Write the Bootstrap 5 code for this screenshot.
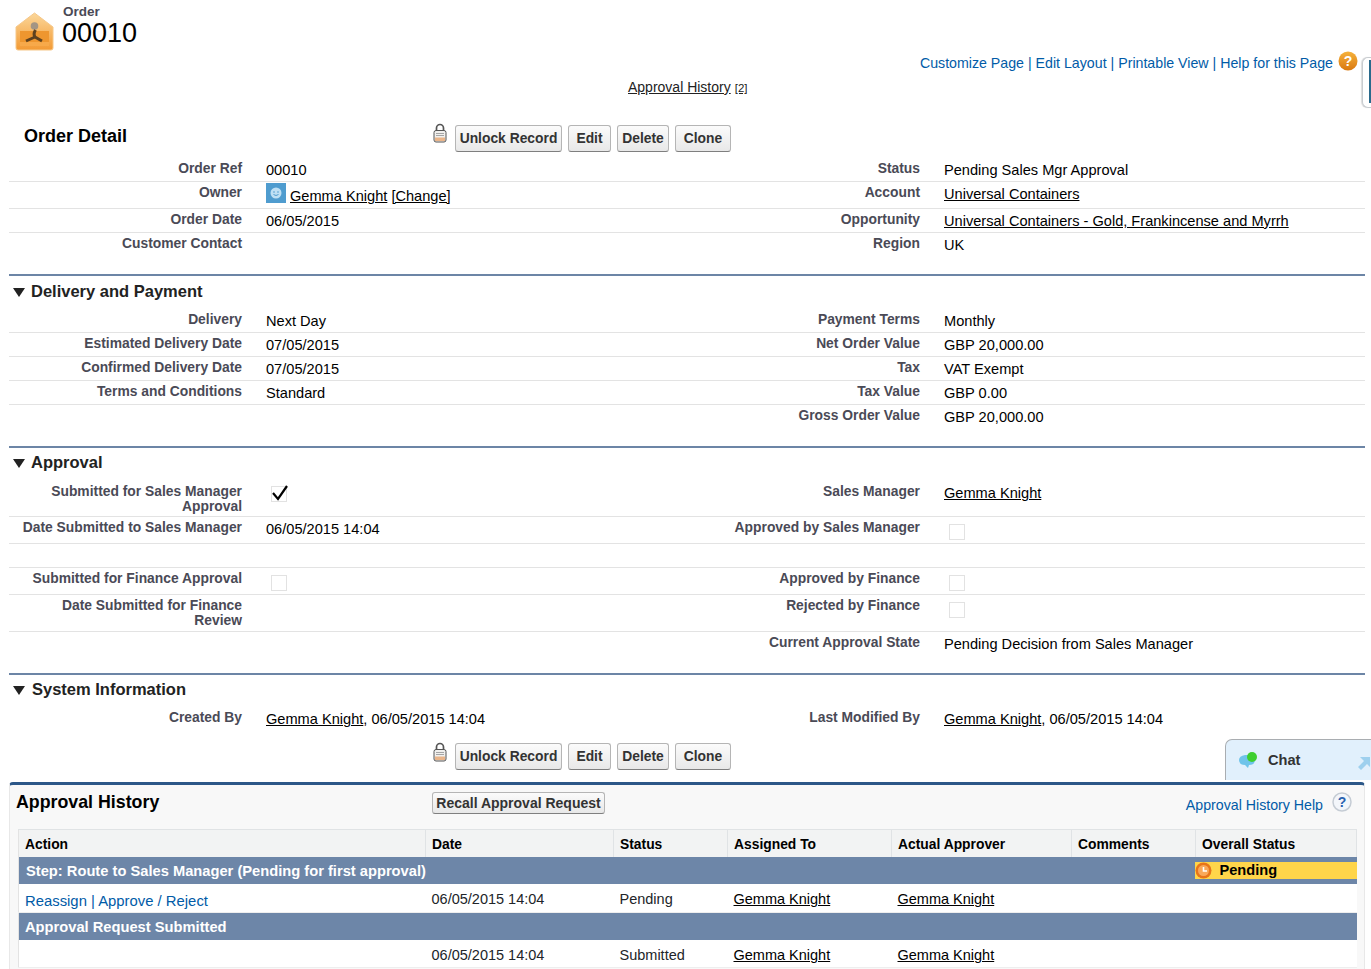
<!DOCTYPE html>
<html lang="en">
<head>
<meta charset="utf-8">
<title>Order 00010</title>
<link href="https://cdn.jsdelivr.net/npm/bootstrap@5.3.0/dist/css/bootstrap.min.css" rel="stylesheet">
<style>
html,body{height:969px;overflow:hidden;background:#fff;}
body{font-family:"Liberation Sans",Arial,sans-serif;font-size:14.6px;color:#000;line-height:1.15;position:relative;}
a{color:#000;}
.pg{padding:0 6px 0 9px;}
.blue,.blue:hover{color:#015ba7;text-decoration:none;}
.sep{color:#015ba7;}
.hdr{height:50px;padding-left:6px;}
.hdr-ico{width:39px;height:39px;margin-top:12px;flex:none;}
.hdr-type{font-size:13.5px;font-weight:700;color:#4a4a56;line-height:16px;padding-top:4px;margin-left:1px;}
.hdr-name{font-size:27px;line-height:27px;}
.hdr-txt{margin-left:8px;}
.links{height:29px;padding-top:5px;padding-right:32px;position:relative;font-size:14.2px;}
.help-o{position:absolute;right:7px;top:1px;width:20px;height:20px;}
.hist-link{height:29px;}
.hist-link a{font-size:14px;color:#222;}
.hist-link small{font-size:11.5px;}
.hist-inner{margin-left:605px;width:140px;white-space:nowrap;padding-left:14px;line-height:16px;}
.title-row{height:50px;}
.title-txt{font-size:18px;font-weight:700;width:423px;padding-left:15px;padding-top:18px;flex:none;}
.lock{width:16px;height:20px;margin-right:7px;flex:none;}
.title-row .lock{margin-top:15px;}
.actions{gap:6px;align-items:flex-start;padding-top:17px;}
.sbtn{--bs-btn-padding-x:0;--bs-btn-padding-y:0;font:700 13.85px/25px "Liberation Sans",Arial,sans-serif;height:27px;color:#333;background:linear-gradient(#fbfbfb,#e8e8e8);border:1px solid #b5b5b5;border-bottom-color:#7f7f7f;border-radius:3px;white-space:nowrap;}
.w-unlock{width:107px;}.w-edit{width:43px;}.w-del{width:52px;}.w-clone{width:56px;}
.rw{display:flex;border-bottom:1px solid #e3e3e3;}
.rw.last{border-bottom:0;}
.lb{width:233px;flex:none;text-align:right;font-weight:700;font-size:13.85px;color:#4a4a56;line-height:15px;padding-top:3px;}
.vl{flex:none;margin-left:24px;width:430px;padding-top:4px;line-height:16px;}
.own{padding-top:5px;}
.lb2{width:224px;}
.vl2{width:421px;}
.h24{height:24px;}.h27{height:27px;}.h36{height:36px;}.h37{height:37px;}
.sect{border-top:2px solid #6c85a6;display:flex;align-items:center;height:35px;padding-bottom:4px;font-size:16.5px;font-weight:700;color:#222;}
.sect.dly{padding-bottom:2px;}
.sect.sys{height:34px;padding-bottom:3px;}
.sect.sys .tri{margin-right:7px;}
.tri{width:12px;height:9px;margin:1px 6px 0 4px;flex:none;}
.gap1{height:17px;}
.ava{width:20px;height:20px;margin-right:4px;vertical-align:-2px;margin-top:-4px;}
.cbx{width:16px;height:16px;display:block;margin:3px 0 0 5px;overflow:visible;}
.cbx.chk{margin-top:1px;}
.btm-bar{height:39px;padding-left:423px;padding-top:12px;}
.btm-bar .lock{margin-top:-1px;}
.btm-btns{gap:6px;}
.panel{background:#f8f8f8;border:1px solid #e8e8e8;border-top:3px solid #2c5788;border-radius:4px 4px 0 0;margin-top:12px;height:220px;padding:0 8px;}
.pan-head{height:44px;position:relative;}
.pan-title{font-size:17.8px;font-weight:700;position:absolute;left:-2px;top:7px;}
.recall{position:absolute;left:414px;top:7px;width:173px;height:22px;line-height:20px;font-size:14px;}
.pan-help{position:absolute;right:33px;top:12px;font-size:14.2px;}
.q{position:absolute;right:4px;top:7px;width:20px;height:20px;}
.hist{table-layout:fixed;width:1338px;margin:0;border-collapse:collapse;--bs-table-bg:transparent;background:#fff;border-left:1px solid #e3e3e3;}
.hist td,.hist th{padding:0;border:0;font-size:14.5px;vertical-align:middle;white-space:nowrap;overflow:visible;}
.hist th{background:#f2f3f3;font-size:13.85px;height:27px;border-right:1px solid #e0e3e5;border-top:1px solid #e0e3e5;padding:3px 0 0 6px;color:#000;}
.hist .st td{background:#6d86a8;color:#fff;font-weight:700;font-size:14.7px;height:27px;padding:2px 0 0 7px;}
.hist .st td.st2{padding-left:6px;}
.hist .dt td{padding:4px 0 0 6px;height:29px;border-bottom:1px solid #eee;}
.hist .dt.a td{height:28px;}
.hist .dt td.acts{font-size:14.85px;padding-top:7px;}
.hist .st td.pend-cell{padding:0;}
.pend-in{display:flex;align-items:center;gap:8px;background:#ffd54a;color:#000;height:17px;font-size:14.6px;margin:1px 0 0 -1px;}
.clk{width:17px;height:17px;flex:none;}
.chat{position:absolute;left:1225px;top:739px;width:146px;height:41px;background:#e1f0fc;border:1px solid #a9adb1;border-right:0;border-bottom:0;border-radius:7px 0 0 0;display:flex;align-items:center;font-weight:700;color:#333;font-size:14.6px;}
.chat-ico{width:21px;height:19px;margin:0 9px 0 12px;}
.chat-arr{position:absolute;right:0;top:16px;width:14px;height:14px;}
.tab{position:absolute;right:0;top:57px;width:9px;height:51px;background:#fff;border:1px solid #c8ccd0;border-right:0;border-radius:6px 0 0 6px;box-shadow:-1px 0 1px #ddd;}
.tab::after{content:"";position:absolute;left:6px;top:2px;bottom:4px;right:0;background:#2a6a8c;}
</style>
</head>
<body>
<svg width="0" height="0" class="position-absolute">
  <defs>
    <symbol id="lockic" viewBox="0 0 16 20"><path d="M4.500 8V5a3.500 3.500 0 0 1 7 0v3" fill="none" stroke="#555" stroke-width="1.700"/><rect x="2" y="7.500" width="12" height="11.500" rx="2" fill="#f1f0ee" stroke="#555"/><rect x="3" y="14.500" width="10" height="3.500" fill="#eab58a"/><path d="M4 10.500h8M4 12.500h8" stroke="#a5a5a5"/></symbol>
    <symbol id="box" viewBox="0 0 16 16"><rect x=".5" y=".5" width="15" height="15" fill="none" stroke="#c4c4c4" stroke-dasharray="1 1"/></symbol>
    <symbol id="trig" viewBox="0 0 12 9"><path d="M0 0h12L6 9z" fill="#222"/></symbol>
  </defs>
</svg>
<div class="pg">
  <div class="hdr d-flex">
    <svg class="hdr-ico" viewBox="0 0 39 39"><defs><linearGradient id="hg" x1="0" y1="0" x2="0" y2="1"><stop offset="0" stop-color="#fbd79a"/><stop offset="1" stop-color="#f39a34"/></linearGradient></defs><path d="M19.500 1 L38 15 V36 Q38 38 36 38 H3 Q1 38 1 36 V15Z" fill="url(#hg)" stroke="#f6c88a"/><path d="M5 19h29v15H5z" fill="#ee962f"/><path d="M5 30h29v4H5z" fill="#f7a94a"/><circle cx="19.500" cy="14" r="3.800" fill="#a39584"/><path d="M20.500 18q-2.500 4 -.5 7M20 25L11 29M20 25L27 29" fill="none" stroke="#5d4120" stroke-width="3"/></svg>
    <div class="hdr-txt"><div class="hdr-type">Order</div><div class="hdr-name">00010</div></div>
  </div>
  <div class="links text-end">
    <a class="blue" href="#">Customize Page</a> <span class="sep">|</span> <a class="blue" href="#">Edit Layout</a> <span class="sep">|</span> <a class="blue" href="#">Printable View</a> <span class="sep">|</span> <a class="blue" href="#">Help for this Page</a>
    <svg class="help-o" viewBox="0 0 20 20"><defs><linearGradient id="og" x1="0" y1="0" x2="0" y2="1"><stop offset="0" stop-color="#f6b23c"/><stop offset="1" stop-color="#d9780f"/></linearGradient></defs><circle cx="10" cy="10" r="9.500" fill="url(#og)"/><text x="10" y="15" text-anchor="middle" font-family="Liberation Sans" font-weight="700" font-size="14" fill="#fff">?</text></svg>
  </div>
  <div class="hist-link"><div class="hist-inner"><a href="#">Approval History</a> <a href="#"><small>[2]</small></a></div></div>
  <div class="title-row d-flex">
    <div class="title-txt">Order Detail</div>
    <svg class="lock"><use href="#lockic"/></svg>
    <div class="d-flex actions"><button class="btn sbtn w-unlock">Unlock Record</button><button class="btn sbtn w-edit">Edit</button><button class="btn sbtn w-del">Delete</button><button class="btn sbtn w-clone">Clone</button></div>
  </div>
  <div class="rw h24"><div class="lb">Order Ref</div><div class="vl">00010</div><div class="lb lb2">Status</div><div class="vl vl2">Pending Sales Mgr Approval</div></div>
  <div class="rw h27"><div class="lb">Owner</div><div class="vl own"><svg class="ava" viewBox="0 0 20 20"><rect width="20" height="20" fill="#4f9ccf"/><circle cx="10" cy="10" r="5.500" fill="#bfe0f4"/><circle cx="8" cy="9" r=".8" fill="#4f9ccf"/><circle cx="12" cy="9" r=".8" fill="#4f9ccf"/><path d="M7.500 11.500q2.500 2 5 0" fill="none" stroke="#4f9ccf"/></svg><a href="#">Gemma Knight</a> <a href="#">[Change]</a></div><div class="lb lb2">Account</div><div class="vl vl2"><a href="#">Universal Containers</a></div></div>
  <div class="rw h24"><div class="lb">Order Date</div><div class="vl">06/05/2015</div><div class="lb lb2">Opportunity</div><div class="vl vl2"><a href="#">Universal Containers - Gold, Frankincense and Myrrh</a></div></div>
  <div class="rw last h24"><div class="lb">Customer Contact</div><div class="vl"></div><div class="lb lb2">Region</div><div class="vl vl2">UK</div></div>
  <div class="gap1"></div>
  <div class="sect dly"><svg class="tri"><use href="#trig"/></svg>Delivery and Payment</div>
  <div class="rw h24"><div class="lb">Delivery</div><div class="vl">Next Day</div><div class="lb lb2">Payment Terms</div><div class="vl vl2">Monthly</div></div>
  <div class="rw h24"><div class="lb">Estimated Delivery Date</div><div class="vl">07/05/2015</div><div class="lb lb2">Net Order Value</div><div class="vl vl2">GBP 20,000.00</div></div>
  <div class="rw h24"><div class="lb">Confirmed Delivery Date</div><div class="vl">07/05/2015</div><div class="lb lb2">Tax</div><div class="vl vl2">VAT Exempt</div></div>
  <div class="rw h24"><div class="lb">Terms and Conditions</div><div class="vl">Standard</div><div class="lb lb2">Tax Value</div><div class="vl vl2">GBP 0.00</div></div>
  <div class="rw last h24"><div class="lb"></div><div class="vl"></div><div class="lb lb2">Gross Order Value</div><div class="vl vl2">GBP 20,000.00</div></div>
  <div class="gap1"></div>
  <div class="sect"><svg class="tri"><use href="#trig"/></svg>Approval</div>
  <div class="rw h36"><div class="lb">Submitted for Sales Manager<br>Approval</div><div class="vl"><svg class="cbx chk" viewBox="0 0 16 16"><use href="#box"/><path d="M2 7l5 6 9-13" fill="none" stroke="#000" stroke-width="2.200"/></svg></div><div class="lb lb2">Sales Manager</div><div class="vl vl2"><a href="#">Gemma Knight</a></div></div>
  <div class="rw h27"><div class="lb">Date Submitted to Sales Manager</div><div class="vl">06/05/2015 14:04</div><div class="lb lb2">Approved by Sales Manager</div><div class="vl vl2"><svg class="cbx"><use href="#box"/></svg></div></div>
  <div class="rw h24"></div>
  <div class="rw h27"><div class="lb">Submitted for Finance Approval</div><div class="vl"><svg class="cbx"><use href="#box"/></svg></div><div class="lb lb2">Approved by Finance</div><div class="vl vl2"><svg class="cbx"><use href="#box"/></svg></div></div>
  <div class="rw h37"><div class="lb">Date Submitted for Finance<br>Review</div><div class="vl"></div><div class="lb lb2">Rejected by Finance</div><div class="vl vl2"><svg class="cbx"><use href="#box"/></svg></div></div>
  <div class="rw last h24"><div class="lb"></div><div class="vl"></div><div class="lb lb2">Current Approval State</div><div class="vl vl2">Pending Decision from Sales Manager</div></div>
  <div class="gap1"></div>
  <div class="sect sys"><svg class="tri"><use href="#trig"/></svg>System Information</div>
  <div class="rw last h24"><div class="lb">Created By</div><div class="vl"><a href="#">Gemma Knight</a>, 06/05/2015 14:04</div><div class="lb lb2">Last Modified By</div><div class="vl vl2"><a href="#">Gemma Knight</a>, 06/05/2015 14:04</div></div>
  <div class="d-flex btm-bar">
    <svg class="lock"><use href="#lockic"/></svg>
    <div class="d-flex btm-btns"><button class="btn sbtn w-unlock">Unlock Record</button><button class="btn sbtn w-edit">Edit</button><button class="btn sbtn w-del">Delete</button><button class="btn sbtn w-clone">Clone</button></div>
  </div>
  <div class="panel">
    <div class="pan-head">
      <div class="pan-title">Approval History</div>
      <button class="btn sbtn recall">Recall Approval Request</button>
      <a class="blue pan-help" href="#">Approval History Help</a>
      <svg class="q" viewBox="0 0 20 20"><circle cx="10" cy="10" r="9" fill="#f3f6fa" stroke="#c5ccd4" stroke-width="1.500"/><text x="10" y="15" text-anchor="middle" font-family="Liberation Sans" font-weight="700" font-size="14" fill="#2a62b0">?</text></svg>
    </div>
    <table class="table hist">
      <thead><tr><th style="width:407px">Action</th><th style="width:188px">Date</th><th style="width:114px">Status</th><th style="width:164px">Assigned To</th><th style="width:180px">Actual Approver</th><th style="width:124px">Comments</th><th style="width:161px">Overall Status</th></tr></thead>
      <tbody>
        <tr class="st"><td colspan="6">Step: Route to Sales Manager (Pending for first approval)</td><td class="pend-cell"><div class="pend-in"><svg class="clk" viewBox="0 0 17 17"><circle cx="8.500" cy="8.500" r="8" fill="#e8751a"/><circle cx="8.500" cy="8.500" r="5.500" fill="#f9a95a"/><path d="M8.500 5v4h3.500" fill="none" stroke="#fff" stroke-width="1.600"/></svg>Pending</div></td></tr>
        <tr class="dt"><td class="acts"><a class="blue" href="#">Reassign</a> <span class="sep">|</span> <a class="blue" href="#">Approve / Reject</a></td><td>06/05/2015 14:04</td><td>Pending</td><td><a href="#">Gemma Knight</a></td><td><a href="#">Gemma Knight</a></td><td></td><td></td></tr>
        <tr class="st"><td class="st2" colspan="7">Approval Request Submitted</td></tr>
        <tr class="dt a"><td></td><td>06/05/2015 14:04</td><td>Submitted</td><td><a href="#">Gemma Knight</a></td><td><a href="#">Gemma Knight</a></td><td></td><td></td></tr>
      </tbody>
    </table>
  </div>
</div>
<div class="tab"></div>
<div class="chat"><svg class="chat-ico" viewBox="0 0 21 19"><path d="M1 9q0-4 6-5h4q6 0 6 5t-6 5l-1 3-3-3q-6 0-6-5z" fill="#6fc4ea"/><circle cx="14" cy="6" r="5" fill="#3ecf2f"/></svg>Chat<svg class="chat-arr" viewBox="0 0 14 14"><path d="M3 1h10v10l-3-3-6 6-3-3 6-6z" fill="#9ed0ee"/></svg></div>
<script src="https://cdn.jsdelivr.net/npm/bootstrap@5.3.0/dist/js/bootstrap.bundle.min.js"></script>
</body>
</html>
